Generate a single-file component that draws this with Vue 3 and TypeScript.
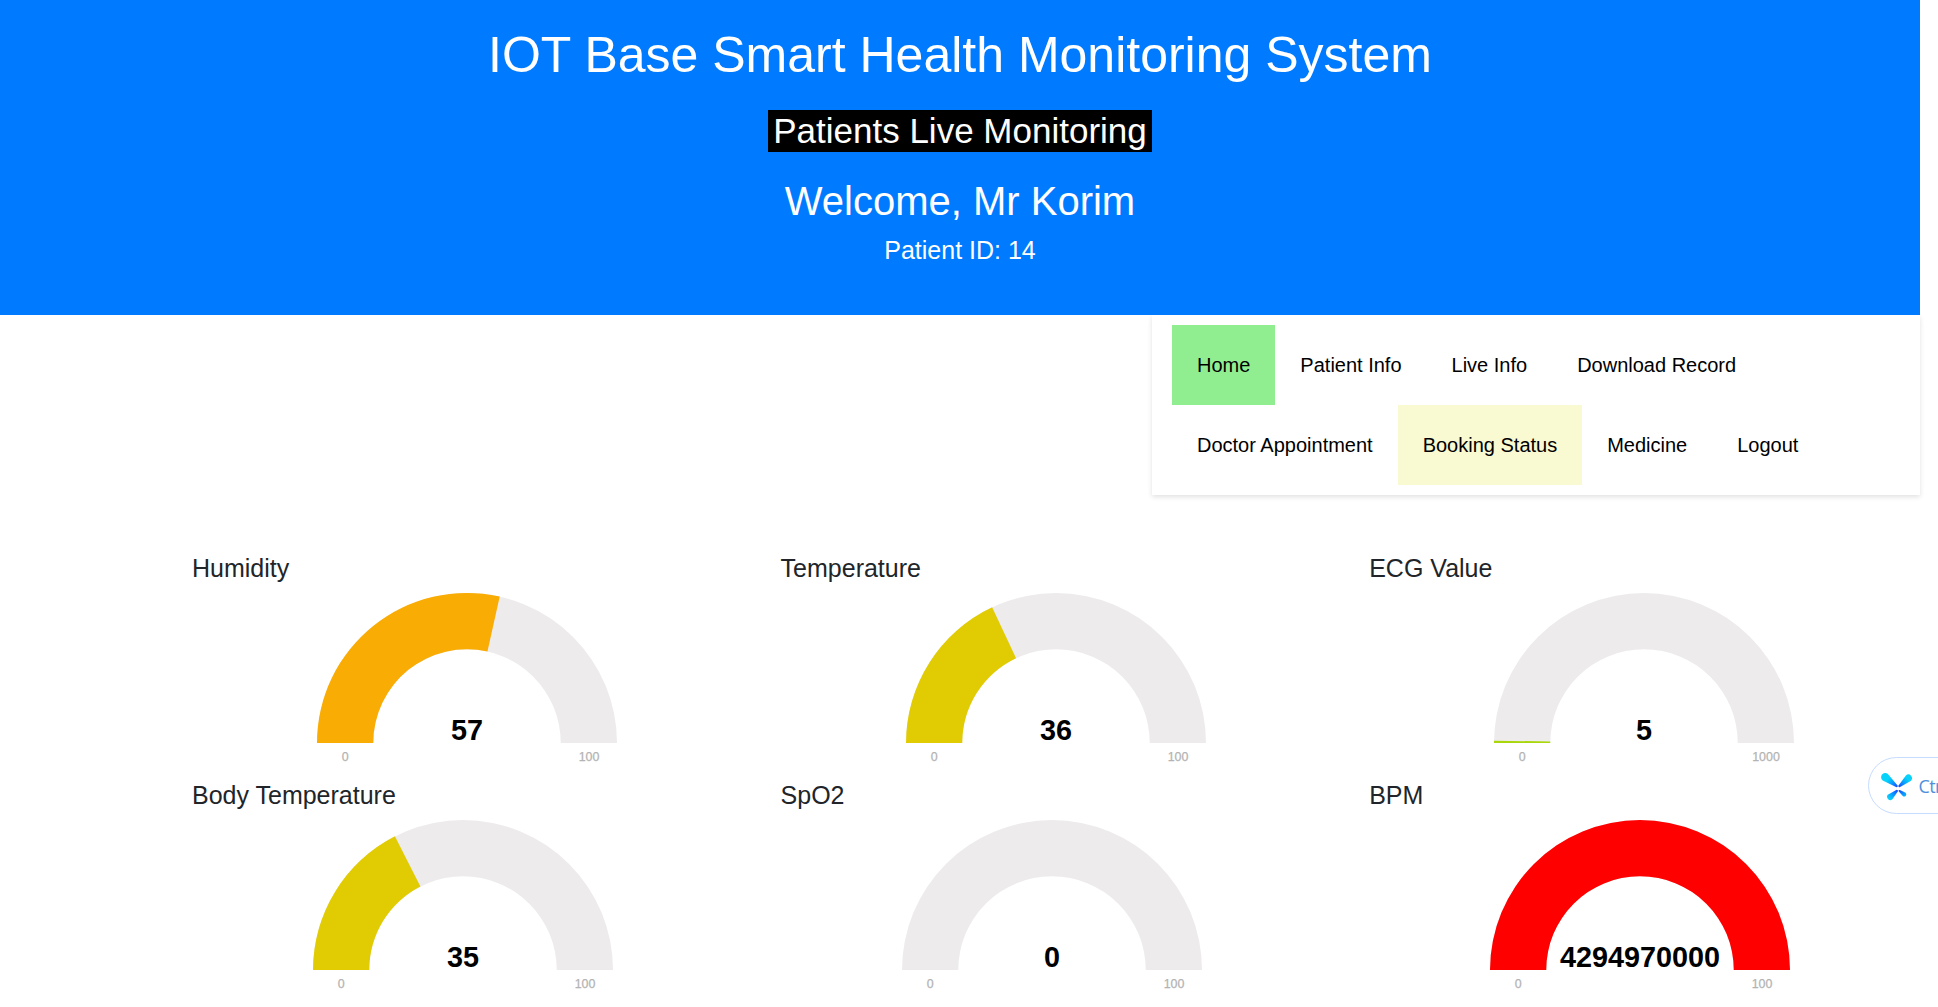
<script setup lang="ts">
interface NavItem {
  label: string
  state?: 'active' | 'hover'
}

interface Gauge {
  title: string
  value: number
  max: number
  color: string
}

const navItems: NavItem[] = [
  { label: 'Home', state: 'active' },
  { label: 'Patient Info' },
  { label: 'Live Info' },
  { label: 'Download Record' },
  { label: 'Doctor Appointment' },
  { label: 'Booking Status', state: 'hover' },
  { label: 'Medicine' },
  { label: 'Logout' },
]

const gaugeRows: Gauge[][] = [
  [
    { title: 'Humidity', value: 57, max: 100, color: '#f9ac03' },
    { title: 'Temperature', value: 36, max: 100, color: '#e1cc04' },
    { title: 'ECG Value', value: 5, max: 1000, color: '#a9d70b' },
  ],
  [
    { title: 'Body Temperature', value: 35, max: 100, color: '#e1cc04' },
    { title: 'SpO2', value: 0, max: 100, color: '#a9d70b' },
    { title: 'BPM', value: 4294970000, max: 100, color: '#ff0000' },
  ],
]

const OUTER = 150
const INNER = 93.75

// Half-ring sector from the left end up to the given fraction of the dial.
function sector(fraction: number): string {
  const f = Math.min(Math.max(fraction, 0), 1)
  const a = Math.PI * (1 - f)
  const x = (r: number) => (OUTER + r * Math.cos(a)).toFixed(3)
  const y = (r: number) => (OUTER - r * Math.sin(a)).toFixed(3)
  return `M0 ${OUTER}H${OUTER - INNER}A${INNER} ${INNER} 0 0 1 ${x(INNER)} ${y(INNER)}L${x(OUTER)} ${y(OUTER)}A${OUTER} ${OUTER} 0 0 0 0 ${OUTER}Z`
}
</script>

<template>
  <div class="page">
    <header class="banner">
      <h1>IOT Base Smart Health Monitoring System</h1>
      <h2>Patients Live Monitoring</h2>
      <p class="welcome">Welcome, Mr Korim</p>
      <p class="patient">Patient ID: 14</p>
    </header>

    <nav class="menu">
      <a v-for="item in navItems" :key="item.label" :class="item.state">{{ item.label }}</a>
    </nav>

    <main class="gauges">
      <div v-for="(row, i) in gaugeRows" :key="i" class="row" :class="{ second: i === 1 }">
        <section v-for="g in row" :key="g.title" class="card">
          <h3>{{ g.title }}</h3>
          <svg class="dial" width="300" height="180" viewBox="0 0 300 180">
            <path :d="sector(1)" fill="#edebeb" />
            <path v-if="g.value > 0" :d="sector(g.value / g.max)" :fill="g.color" />
            <text class="value" x="150" y="147">{{ g.value }}</text>
            <text class="limit" x="28.3" y="168">0</text>
            <text class="limit" x="272" y="168">{{ g.max }}</text>
          </svg>
        </section>
      </div>
    </main>

    <aside class="shortcut">
      <svg width="32" height="30" viewBox="0 0 32 30">
        <defs>
          <radialGradient id="petal" gradientUnits="userSpaceOnUse" cx="17" cy="17.500" r="17">
            <stop offset="0.1" stop-color="#1446ff" />
            <stop offset="0.45" stop-color="#0a98ff" />
            <stop offset="0.8" stop-color="#06d2fa" />
          </radialGradient>
        </defs>
        <g fill="url(#petal)">
          <path d="M1.7 9.5A4.2 4.2 0 0 1 6.9 2.9L16.4 14.3A1.15 1.15 0 0 1 15 16.1Z" />
          <path d="M24.9 4.5A3.6 3.6 0 0 1 29.7 9.9L19.1 16A1.15 1.15 0 0 1 17.5 14.4Z" />
          <path d="M11.2 28.6A3.3 3.3 0 0 1 6.8 23.8L15.2 19A1.15 1.15 0 0 1 16.8 20.6Z" />
          <path d="M24.6 21.8A2.15 2.15 0 0 1 22 25.2L17.8 20.5A0.9 0.9 0 0 1 18.9 19.1Z" />
        </g>
      </svg>
      <span>Ctrl</span>
    </aside>
  </div>
</template>

<style>
body {
  margin: 0;
  background: #fff;
  overflow: hidden;
}
</style>

<style scoped>
.page {
  position: relative;
  height: 1007px;
  overflow: hidden;
  padding-right: 18px;
  box-sizing: border-box;
  font-family: "Liberation Sans", Arial, sans-serif;
  color: #212529;
}
h1, h2, h3, p {
  margin: 0;
  font-weight: 400;
  line-height: 1.2;
}
.banner {
  position: relative;
  z-index: 1;
  height: 315px;
  box-sizing: border-box;
  padding-top: 25px;
  display: flex;
  flex-direction: column;
  align-items: center;
  background: #007bff;
  color: #fff;
}
h1 {
  font-size: 50px;
}
h2 {
  margin-top: 25px;
  padding: 0 5px;
  font-size: 35px;
  background: #000;
}
.welcome {
  margin-top: 25px;
  font-size: 40px;
}
.patient {
  margin-top: 10px;
  font-size: 25px;
}
.menu {
  display: flex;
  flex-wrap: wrap;
  width: 768px;
  margin-left: auto;
  padding: 10px 20px;
  box-sizing: border-box;
  box-shadow: 0 2px 5px rgba(0, 0, 0, 0.12);
}
.menu a {
  padding: 0 25px;
  font-size: 20px;
  line-height: 80px;
  color: #000;
}
.menu .active {
  background: #90ee90;
}
.menu .hover {
  background: #f9f9d2;
}
.gauges {
  padding: 58px 0 0 192px;
}
.row {
  display: flex;
  height: 227px;
}
.card {
  flex: 0 0 588.6px;
}
h3 {
  font-size: 25px;
  line-height: 30px;
}
.dial {
  display: block;
  margin: 10px 0 0 125px;
}
.second .dial {
  margin-left: 121.2px;
}
.value {
  font-size: 28.8px;
  font-weight: 700;
  text-anchor: middle;
  fill: #000;
}
.limit {
  font-size: 12.4px;
  text-anchor: middle;
  fill: #b3b3b3;
  stroke: #b3b3b3;
  stroke-width: 0.25px;
}
.shortcut {
  position: absolute;
  left: 1868px;
  top: 757px;
  width: 120px;
  height: 57px;
  box-sizing: border-box;
  padding-left: 12px;
  display: flex;
  align-items: center;
  gap: 5.500px;
  border: 1px solid #c6dcff;
  border-radius: 29px;
  background: #fff;
}
.shortcut span {
  font: 500 18px "Open Sans", "Noto Sans", sans-serif;
  letter-spacing: -0.6px;
  color: #4f8fdc;
}
</style>
